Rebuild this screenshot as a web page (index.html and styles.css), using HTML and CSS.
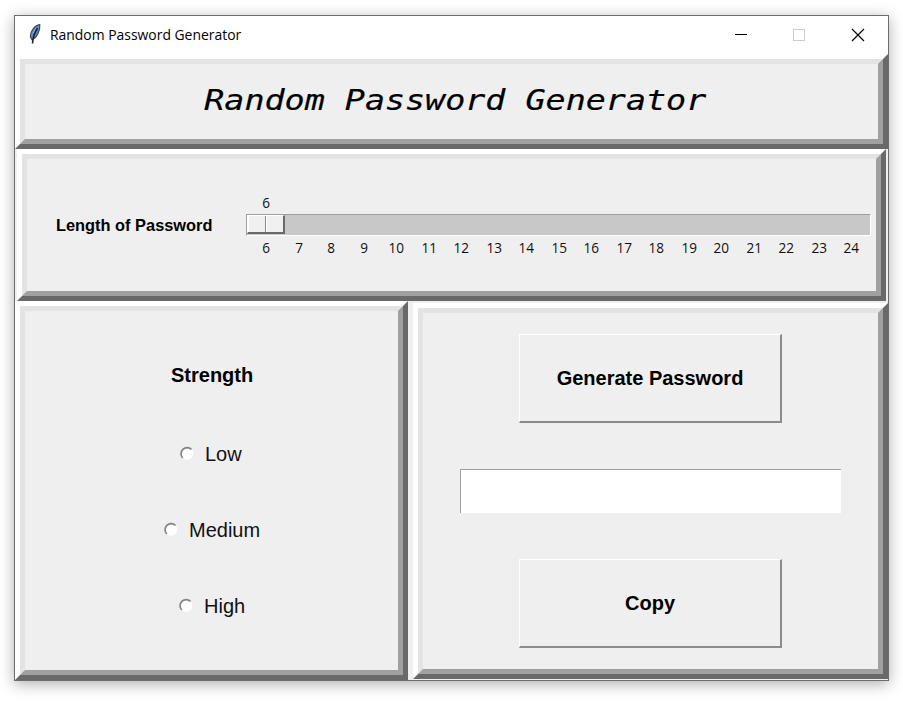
FILE: index.html
```html
<!DOCTYPE html>
<html lang="en">
<head>
<meta charset="utf-8">
<title>Random Password Generator</title>
<link rel="stylesheet" href="styles.css">
</head>
<body>
<main class="window">
  <header class="titlebar">
    <svg class="feather" width="14" height="22" viewBox="0 0 14 22">
      <path d="M11.8 1.5 C7 2 2.4 8 2.3 13.5 L4 16.8 C9 15 12.5 7 11.8 1.5Z" fill="#5f8dc2" stroke="#39434f" stroke-width="1.1"/>
      <path d="M9 4.5 L5.5 10" stroke="#7facdf" stroke-width="1.8"/>
      <path d="M9.5 5 C7 9 5 13 4.5 20.5" fill="none" stroke="#1c2024" stroke-width="1.6"/>
    </svg>
    <span class="caption">Random Password Generator</span>
    <svg class="controls" width="132" height="14" viewBox="0 0 132 14" fill="none" shape-rendering="crispEdges">
      <path d="M1 6.5H13" stroke="#000"/>
      <rect x="59.5" y="1.5" width="11" height="11" stroke="#ccc"/>
      <path d="M118 1L130 13M130 1L118 13" stroke="#000" shape-rendering="auto" stroke-width="1.15"/>
    </svg>
  </header>
  <section class="panel banner"><div class="inner"><h1>Random Password Generator</h1></div></section>
  <section class="panel length"><div class="inner">
    <label class="length-label"><span>Length of Password</span></label>
    <div class="scale">
      <div class="value"><span>6</span></div>
      <div class="trough"><div class="thumb"><i></i><i></i></div></div>
      <div class="ticks"><span>6</span><span>7</span><span>8</span><span>9</span><span>10</span><span>11</span><span>12</span><span>13</span><span>14</span><span>15</span><span>16</span><span>17</span><span>18</span><span>19</span><span>20</span><span>21</span><span>22</span><span>23</span><span>24</span></div>
    </div>
  </div></section>
  <div class="columns">
    <section class="panel strength"><div class="inner">
      <h2>Strength</h2>
      <div class="option low"><svg class="radio" width="16" height="16"><use href="#dot"/></svg><span>Low</span></div>
      <div class="option medium"><svg class="radio" width="16" height="16"><use href="#dot"/></svg><span>Medium</span></div>
      <div class="option high"><svg class="radio" width="16" height="16"><use href="#dot"/></svg><span>High</span></div>
    </div></section>
    <section class="panel actions"><div class="inner">
      <div class="button"><span>Generate Password</span></div>
      <div class="entry"></div>
      <div class="button"><span>Copy</span></div>
    </div></section>
  </div>
</main>
<svg width="0" height="0" class="defs"><defs><g id="dot">
  <circle cx="8" cy="8.5" r="6.3" fill="#fff"/>
  <path d="M3.8 13A6 6 0 0 1 12.5 4.4" fill="none" stroke="#858585" stroke-width="1.7"/>
</g></defs></svg>
</body>
</html>
```
FILE: styles.css
```css
* { box-sizing: border-box; }
body { margin: 0; width: 903px; height: 702px; overflow: hidden; background: #fff; padding: 15px 14px; font-family: "Liberation Sans", Arial, sans-serif; color: #000; }
h1, h2 { margin: 0; }
.defs { display: none; }
.window { width: 875px; height: 666px; border: 1px solid #6d6d6d; background: #efefef; box-shadow: 0 3px 14px rgba(0,0,0,.32); display: flex; flex-direction: column; }
.titlebar { height: 38px; flex: none; background: #fff; display: flex; align-items: center; padding-left: 13px; }
.feather { flex: none; margin-top: -2px; }
.caption { margin: -2px 0 0 8px; font: 14.6px/20px "Open Sans", sans-serif; white-space: nowrap; width: 191px; transform: scaleX(.953); transform-origin: 0 50%; }
.controls { margin-left: 493px; flex: none; }
.panel { border: 5px solid; border-color: #fff #696969 #696969 #fff; }
.inner { width: 100%; height: 100%; border: 5px solid; border-color: #e3e3e3 #a0a0a0 #a0a0a0 #e3e3e3; background: #efefef; }
.banner { height: 95px; flex: none; }
.banner .inner { display: flex; justify-content: center; align-items: center; padding: 0 0 4px 7px; }
h1 { font: oblique 400 29px/36px "DejaVu Sans Mono", monospace; white-space: pre; transform: scaleX(1.15); -webkit-text-stroke: .2px #000; }
.length { height: 152px; flex: none; width: 869px; margin-left: 2px; }
.length .inner { display: flex; padding: 36px 0 0 29px; }
.length-label { width: 190px; padding-top: 21px; font-weight: 700; font-size: 17px; line-height: 20px; white-space: nowrap; }
.length-label span { display: inline-block; transform: scaleX(.963); transform-origin: 0 50%; }
.scale { width: 625px; font: 14.6px/18px "Open Sans", sans-serif; color: #111; }
.value { height: 18px; width: 41px; text-align: center; }
.value span { display: inline-block; transform: translateY(-2px) scaleX(.93); }
.trough { height: 22px; background: #c8c8c8; border: 1px solid; border-color: #a0a0a0 #fff #fff #a0a0a0; margin-top: 1px; }
.thumb { width: 38px; height: 19px; background: #f0f0f0; border: 1px solid; border-color: #fff #696969 #696969 #fff; display: flex; border-right-width: 2px; border-bottom-width: 2px; }
.thumb i { flex: 1; border-left: 1px solid #fff; }
.thumb i:first-child { border-right: 1px solid #888; }
.ticks { display: grid; grid-template-columns: repeat(19, 32.5px); padding-left: 4px; text-align: center; margin-top: 2px; }
.ticks span { transform: scaleX(.93); }
.columns { flex: 1; display: flex; justify-content: space-between; }
.strength { width: 393px; }
.strength .inner { display: flex; flex-direction: column; align-items: flex-start; }
h2 { font-size: 20px; line-height: 24px; margin: 52px 0 0 146px; }
.option { display: flex; height: 24px; gap: 10px; align-items: center; font-size: 20px; line-height: 24px; color: #111; }
.radio { flex: none; margin-top: -2px; }
.low { margin: 55px 0 0 154px; }
.medium { margin: 52px 0 0 138px; }
.high { margin: 52px 0 0 153px; }
.actions { width: 475px; margin: 2px 0 1px; }
.actions .inner { display: flex; flex-direction: column; align-items: center; padding-top: 21px; }
.button { width: 263px; height: 89px; border: 1px solid; border-color: #fff #8b8b8b #8b8b8b #fff; border-right-width: 2px; border-bottom-width: 2px; display: flex; align-items: center; justify-content: center; font-weight: 700; font-size: 20px; }
.entry { width: 381px; height: 44px; margin: 46px 0; background: #fff; border-top: 1px solid #a0a0a0; border-left: 1px solid #a0a0a0; }
```
